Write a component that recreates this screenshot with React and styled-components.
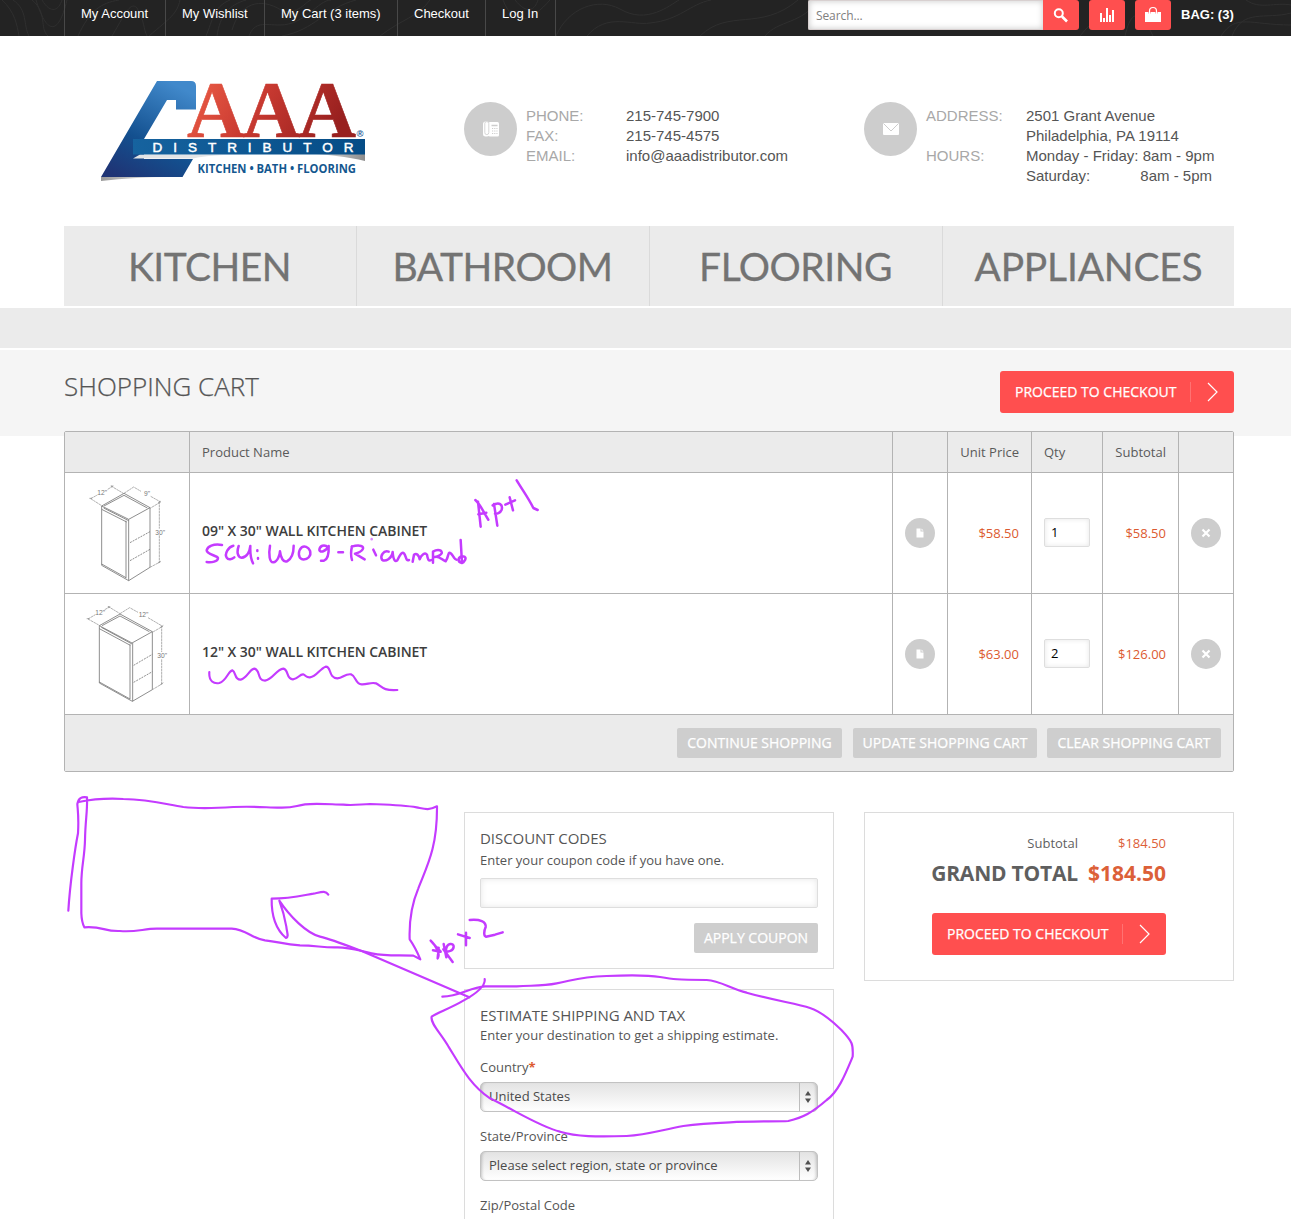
import React from "react";
import styled, { createGlobalStyle, css } from "styled-components";

const sans = '"Open Sans", "Noto Sans", sans-serif';
const arial = '"Liberation Sans", Arial, sans-serif';
const red = "#ff4f4f";
const line = "#b3b3b3";
const ink = "#c43bff";

const GlobalStyle = createGlobalStyle`
  * { box-sizing: border-box; }
  html, body { margin: 0; padding: 0; }
  body { background: #fff; font: 13px/20px ${sans}; color: #555; }
  button, input { font: inherit; margin: 0; }
`;

const Page = styled.div`
  position: relative;
  width: 1291px;
  height: 1219px;
  overflow: hidden;
  background: #fff;
`;
const Inner = styled.div`
  width: 1170px;
  margin-left: 64px;
`;

/* top bar */
const TopBar = styled.div`
  position: relative;
  height: 36px;
  background: #232323;
`;
const Contours = styled.svg`
  position: absolute;
  inset: 0;
  display: block;
`;
const TopInner = styled(Inner)`
  position: relative;
  display: flex;
  justify-content: space-between;
`;
const TopLinks = styled.nav`
  display: flex;
  height: 36px;
  border-right: 1px solid #484848;
`;
const TopLink = styled.a`
  width: ${(p) => p.$w}px;
  border-left: 1px solid #484848;
  padding: 4px 0 0 16px;
  font: 13px/20px ${arial};
  color: #fff;
  white-space: nowrap;
`;
const TopTools = styled.div`
  display: flex;
  width: 426px;
`;
const Search = styled.input`
  width: 235px;
  height: 30px;
  padding: 0 7px 0;
  border: 1px solid #d8d0d0;
  border-right: 0;
  border-radius: 2px 0 0 2px;
  background: #fff;
  box-shadow: inset 0 0 6px rgba(0, 0, 0, 0.22);
  font: 12px/20px ${sans};
  letter-spacing: -0.1px;
  &::placeholder { color: #808080; opacity: 1; }
`;
const ToolButton = styled.button`
  display: flex;
  align-items: center;
  justify-content: center;
  width: 36px;
  height: 30px;
  padding: 0;
  border: 0;
  margin-right: 10px;
  border-radius: ${(p) => (p.$attached ? "0 3px 3px 0" : "3px")};
  background: ${red};
`;
const Bag = styled.span`
  padding-top: 5px;
  font: bold 13px/20px ${arial};
  color: #fff;
  white-space: nowrap;
`;

/* header */
const Header = styled(Inner)`
  display: grid;
  grid-template-columns: 400px 400px 370px;
  height: 190px;
`;
const LogoBox = styled.div`
  padding: 39px 0 0 31px;
`;
const LogoSvg = styled.svg`
  display: block;
  overflow: visible;
`;
const Contact = styled.div`
  display: grid;
  grid-template-columns: 62px 100px 1fr;
  padding-top: 66px;
  font: 15px/20px ${arial};
`;
const Round = styled.span`
  display: flex;
  align-items: center;
  justify-content: center;
  width: ${(p) => p.$w}px;
  height: ${(p) => p.$h}px;
  border-radius: 50%;
  background: #cdcdcd;
`;
const Lines = styled.div`
  padding-top: 4px;
  white-space: pre;
  color: ${(p) => (p.$label ? "#a8a8a8" : "#555")};
`;
const Spread = styled.div`
  display: flex;
  justify-content: space-between;
  width: 186px;
`;

/* category nav */
const CategoryNav = styled(Inner)`
  display: grid;
  grid-template-columns: 293px 293px 293px 291px;
  height: 80px;
  background: #ebebeb;
`;
const Category = styled.a`
  display: flex;
  justify-content: center;
  height: 80px;
  padding-right: ${(p) => (p.$last ? 0 : 1)}px;
  border-right: ${(p) => (p.$last ? "0" : "1px solid #dadada")};
  font: 39px/80px Lato, sans-serif;
  letter-spacing: ${(p) => (p.$last ? "-0.2px" : "-0.5px")};
  color: #737373;
  -webkit-text-stroke: 0.3px #737373;
`;
const Strip = styled.div`
  height: 40px;
  margin: 2px 0;
  background: #ebebeb;
`;
const TitleBand = styled.div`
  height: 86px;
  background: #f5f5f5;
`;
const TitleRow = styled(Inner)`
  display: flex;
  justify-content: space-between;
  padding-top: 21px;
`;
const Title = styled.h1`
  margin: -1px 0 0;
  font: 300 26px/32px ${sans};
  color: #555;
  -webkit-text-stroke: 0.25px #555;
`;
const CheckoutButton = styled.button`
  display: flex;
  align-items: center;
  width: 234px;
  height: 42px;
  padding: 0 15px;
  border: 0;
  border-radius: 3px;
  background: ${red};
  color: #fff;
  font: 14px/20px ${sans};
  -webkit-text-stroke: 0.25px #fff;
  white-space: nowrap;
`;
const CheckoutArrow = styled.svg`
  margin-left: auto;
  flex: none;
`;

/* cart table */
const Cart = styled(Inner)`
  position: relative;
  margin-top: -5px;
  border: 1px solid ${line};
  border-radius: 2px;
  background: #fff;
`;
const gridCols = css`
  display: grid;
  grid-template-columns: 124px 703px 55px 84px 71px 76px 55px;
`;
const HeadRow = styled.div`
  ${gridCols}
  height: 40px;
  background: #ebebeb;
`;
const Row = styled.div`
  ${gridCols}
  height: 121px;
  border-top: 1px solid ${line};
`;
const Cell = styled.div`
  display: flex;
  align-items: center;
  justify-content: ${(p) => (p.$right ? "flex-end" : "flex-start")};
  padding: 0 12px;
  border-left: 1px solid ${line};
  white-space: nowrap;
  color: ${(p) => (p.$price ? "#dc5a30" : "#5a5a5a")};
  &:first-child { border-left: 0; padding: 0; }
`;
const ProductName = styled.h2`
  margin: 0 0 5px;
  font: 600 14px/20px ${sans};
  letter-spacing: -0.04px;
  color: #3d3d3d;
`;
const Qty = styled.input`
  width: 46px;
  height: 29px;
  margin-bottom: 1px;
  padding: 0 6px 1px;
  border: 1px solid #dedede;
  border-radius: 2px;
  box-shadow: inset 0 0 5px rgba(0, 0, 0, 0.1);
  color: #000;
`;
const FootRow = styled.div`
  display: flex;
  justify-content: flex-end;
  gap: 10px;
  height: 57px;
  padding: 13px 12px 0 0;
  border-top: 1px solid ${line};
  background: #ebebeb;
`;
const GreyButton = styled.button`
  width: ${(p) => p.$w}px;
  height: 30px;
  padding: 0;
  border: 0;
  border-radius: 2px;
  margin-right: ${(p) => p.$mr || 0}px;
  background: #cecece;
  color: #fff;
  font: 14px/20px ${sans};
  -webkit-text-stroke: 0.25px #fff;
  white-space: nowrap;
`;

/* lower panels */
const Panels = styled(Inner)`
  display: grid;
  grid-template-columns: 370px 370px;
  column-gap: 30px;
  align-items: start;
  padding: 40px 0 0 400px;
`;
const Stack = styled.div`
  display: flex;
  flex-direction: column;
  gap: 20px;
`;
const Panel = styled.section`
  width: 370px;
  height: ${(p) => p.$h}px;
  padding: 15px;
  border: 1px solid #dcdcdc;
`;
const PanelTitle = styled.h3`
  margin: 0;
  font: 15px/20px ${sans};
  height: ${(p) => p.$h}px;
  letter-spacing: -0.05px;
  color: #555;
`;
const Note = styled.p`
  margin: 0;
  line-height: 20px;
  white-space: nowrap;
`;
const Coupon = styled.input`
  display: block;
  width: 338px;
  height: 30px;
  margin: 8px 0 15px;
  border: 1px solid #dedede;
  border-radius: 2px;
  box-shadow: inset 0 0 6px rgba(0, 0, 0, 0.1);
`;
const RightAlign = styled.div`
  display: flex;
  justify-content: flex-end;
`;
const Label = styled.label`
  display: block;
  padding-top: ${(p) => p.$pt}px;
  height: ${(p) => p.$pt + 25}px;
  line-height: 20px;
`;
const Required = styled.b`
  color: #dc5a30;
`;
const SelectBox = styled.div`
  display: flex;
  align-items: center;
  width: 338px;
  height: 30px;
  padding-left: 8px;
  border: 1px solid #c2c2c2;
  border-radius: 5px;
  background: linear-gradient(#e3e3e3, #fff);
  box-shadow: inset 3px 0 3px -2px rgba(0, 0, 0, 0.2), inset -3px 0 3px -2px rgba(0, 0, 0, 0.2);
  color: #4a4a4a;
`;
const SelectValue = styled.span`
  flex: 1;
  padding-bottom: 2px;
`;
const SelectArrows = styled.svg`
  width: 18px;
  height: 28px;
  border-left: 1px solid #bdbdbd;
`;
const Totals = styled.dl`
  display: grid;
  grid-template-columns: 198px 88px;
  justify-items: end;
  margin: 0;
  padding-top: 5px;
  width: 286px;
`;
const Term = styled.dt`
  font: ${(p) => (p.$grand ? "700 21px/34px" : "13px/20px")} ${sans};
  letter-spacing: ${(p) => (p.$grand ? "-0.2px" : "0")};
  height: ${(p) => (p.$grand ? 37 : 20)}px;
  padding-top: ${(p) => (p.$grand ? 3 : 0)}px;
  color: #5f5f5f;
  white-space: nowrap;
`;
const Amount = styled(Term).attrs({ as: "dd" })`
  margin: 0;
  letter-spacing: 0;
  color: #dc6038;
`;
const TotalAction = styled.div`
  padding: 23px 0 0 52px;
`;
const Ink = styled.svg`
  position: absolute;
  inset: 0;
  pointer-events: none;
`;

function Logo() {
  return (
    <LogoSvg width="275" height="110" viewBox="95 75 275 110">
      <defs>
        <linearGradient id="blue" x1="0.7" y1="0" x2="0.2" y2="1">
          <stop offset="0" stopColor="#4189cb" />
          <stop offset="0.6" stopColor="#13508f" />
          <stop offset="1" stopColor="#1f3475" />
        </linearGradient>
        <linearGradient id="red" x1="0" x2="1" y1="0" y2="0.3">
          <stop offset="0" stopColor="#f2634a" />
          <stop offset="0.5" stopColor="#c93a31" />
          <stop offset="1" stopColor="#98201f" />
        </linearGradient>
        <linearGradient id="banner" x1="0" x2="1">
          <stop offset="0" stopColor="#16639f" />
          <stop offset="1" stopColor="#054c86" />
        </linearGradient>
        <linearGradient id="shade" x1="0" x2="1">
          <stop offset="0" stopColor="#fff" />
          <stop offset="1" stopColor="#8c8c8c" />
        </linearGradient>
        <linearGradient id="shadeLeft" x1="0" x2="1">
          <stop offset="0" stopColor="#999" />
          <stop offset="1" stopColor="#fff" />
        </linearGradient>
      </defs>
      <path d="M101 177h74q-40 0-74 4z" fill="url(#shadeLeft)" />
      <path d="M300 153h65v8q-25-6-65-8z" fill="url(#shade)" />
      <path d="M157 81H191q5 0 5 5V109.500H176V100H167L144 139V159H193L182.500 177H101z" fill="url(#blue)" />
      <path d="M133 158.500 140 154.500H250q-40 0-57 4z" fill="#e2e4e6" />
      <text x="187" y="137" fontFamily="Liberation Serif, serif" fontWeight="bold" fontSize="80" textLength="169" lengthAdjust="spacing" fill="url(#red)" stroke="url(#red)" strokeWidth="0.600">AAA</text>
      <path d="M133 139H365V154.500H133z" fill="url(#banner)" />
      <text x="152.500" y="151.500" fontFamily="Liberation Sans, sans-serif" fontSize="13.500" textLength="201" lengthAdjust="spacing" fill="#fff" stroke="#fff" strokeWidth="0.500">DISTRIBUTOR</text>
      <text x="356.500" y="136.500" fontFamily="Liberation Sans, sans-serif" fontWeight="bold" fontSize="9.500" fill="#1a5a97">®</text>
      <text x="197.500" y="172.500" fontFamily="Open Sans, sans-serif" fontWeight="bold" fontSize="12.500" textLength="158.500" lengthAdjust="spacingAndGlyphs" fill="#14578f">KITCHEN • BATH • FLOORING</text>
    </LogoSvg>
  );
}

function Checkout() {
  return (
    <CheckoutButton>
      PROCEED TO CHECKOUT
      <CheckoutArrow width="30" height="22">
        <path d="M1.500 1v20" stroke="#ff7272" />
        <path d="M19 2 28 11 19 20" fill="none" stroke="#fff" strokeWidth="1.200" />
      </CheckoutArrow>
    </CheckoutButton>
  );
}

function NoteIcon() {
  return (
    <Round $w={30} $h={30}>
      <svg width="8" height="10" viewBox="0 0 8 10">
        <path d="M.5.5H4.500V3.500H7.500V9.500H.5z" fill="#fff" />
        <path d="M5.500.5 7.500 2.500H5.500z" fill="#fff" />
      </svg>
    </Round>
  );
}

function RemoveIcon() {
  return (
    <Round $w={30} $h={30}>
      <svg width="10" height="10" viewBox="0 0 10 10">
        <path d="M1.500 1.500 8.500 8.500M8.500 1.500 1.500 8.500" stroke="#fff" strokeWidth="2.200" />
      </svg>
    </Round>
  );
}

const NarrowCabinet = () => (
  <svg width="124" height="120" viewBox="15 129 372 360" fill="none" stroke="#777" strokeWidth="2.500">
    <path d="M125 228 192 190 270 233 206 268zM125 228V406L206 452 270 412V233M206 268V452M198 272V445M125 238 200 276M131 234 206 272M132 228 192 196 262 234M125 402 198 443" />
    <path d="M210 338 270 305M210 392 270 358" strokeDasharray="6 3" />
    <path d="M92 206 112 195M143 178 160 168M92 206 125 227M153 168 190 190M192 190 221 171 243 184M272 199 302 216 270 235M298 214V296M298 316V398M270 412 302 395M88 205h9M152 168h8M294 219l9-6M294 399l9-6" stroke="#888" strokeWidth="2" strokeDasharray="8 1.500" />
    <g fill="#777" stroke="none" fontFamily="Liberation Sans, sans-serif" fontSize="20">
      <text x="112" y="194">12"</text>
      <text x="252" y="198">9"</text>
      <text x="286" y="314">30"</text>
    </g>
  </svg>
);

const WideCabinet = () => (
  <svg width="124" height="120" viewBox="15 12 372 360" fill="none" stroke="#777" strokeWidth="2.500">
    <path d="M118 107 180 72 277 125 216 159zM118 107V279L217 334 277 299V125M218 159V334M210 163V328M118 116 211 166M124 112 216 162M126 107 180 78 268 125M118 276 210 327" />
    <path d="M221 226 277 193M221 277 277 245" strokeDasharray="6 3" />
    <path d="M84 87 106 74M134 59 151 50M84 87 118 106M144 49 180 71M180 71 209 53 234 67M264 83 308 109 277 127M305 107V186M305 208V282M277 299 309 280M80 86h9M143 51h9M301 112l9-6M301 284l9-6" stroke="#888" strokeWidth="2" strokeDasharray="8 1.500" />
    <g fill="#777" stroke="none" fontFamily="Liberation Sans, sans-serif" fontSize="20">
      <text x="106" y="75">12"</text>
      <text x="236" y="80">12"</text>
      <text x="292" y="204">30"</text>
    </g>
  </svg>
);

const items = [
  { name: '09" X 30" WALL KITCHEN CABINET', price: "$58.50", qty: 1, total: "$58.50", Drawing: NarrowCabinet },
  { name: '12" X 30" WALL KITCHEN CABINET', price: "$63.00", qty: 2, total: "$126.00", Drawing: WideCabinet },
];

const topLinks = [
  ["My Account", 101],
  ["My Wishlist", 99],
  ["My Cart (3 items)", 133],
  ["Checkout", 88],
  ["Log In", 70],
];

function Select({ value }) {
  return (
    <SelectBox>
      <SelectValue>{value}</SelectValue>
      <SelectArrows viewBox="0 0 17 28">
        <path d="M5 12.500 8 8l3 4.500zM5 15.500 8 20l3-4.500z" fill="#505050" />
      </SelectArrows>
    </SelectBox>
  );
}

function Annotations() {
  return (
    <Ink width="1291" height="1219" fill="none" stroke={ink} strokeLinecap="round" strokeLinejoin="round">
      <g transform="translate(60 430) scale(.33333)" strokeWidth="7.500">
        <path d="M486 345C460 340 442 350 440 361C440 374 472 376 474 384C474 395 455 398 440 396" />
        <path d="M520 347C505 350 493 372 500 383C505 391 516 388 523 382" />
        <path d="M536 348C530 365 532 382 545 383C560 382 569 366 571 348C570 368 572 385 579 400M592 361v2M594 384v2" />
        <path d="M630 347C625 375 629 398 640 397C653 396 660 372 660 364C662 383 670 398 681 394C695 386 701 365 701 347" />
        <path d="M725 352C714 362 713 383 727 388C743 390 755 378 750 362C745 350 733 347 725 352" />
        <path d="M805 352C792 341 779 348 778 360C780 369 798 365 806 348C807 370 803 388 792 392L783 392M835 367 849 367" />
        <path d="M876 349C872 365 873 380 876 390M875 350C900 343 914 349 908 358C902 367 889 370 885 371L914 388M940 359 948 376" />
        <path d="M935 327v1" strokeOpacity="0.6" />
        <path d="M986 365C970 360 960 378 966 389C976 397 996 385 998 366C1000 390 1005 397 1012 391C1018 378 1025 364 1032 370C1039 378 1037 394 1047 390" />
        <path d="M1058 395 1062 374C1070 368 1077 376 1079 388C1084 374 1095 366 1101 374C1103 388 1106 395 1114 390" />
        <path d="M1119 398V365C1134 356 1148 361 1145 370C1140 378 1128 380 1124 381C1138 377 1145 390 1157 394C1165 383 1164 369 1168 368C1178 368 1180 389 1190 389" />
        <path d="M1202 330 1206 399C1190 395 1195 381 1206 379C1219 380 1220 386 1210 397" />
        <path d="M1262 290 1254 215M1246 210C1263 225 1273 252 1285 269M1255 253 1279 248M1302 222 1312 287M1298 226C1318 214 1329 224 1325 239C1321 249 1310 252 1305 251M1336 224 1365 211M1349 202 1359 241M1370 151C1390 184 1407 207 1420 234L1433 240" />
      </g>
      <g transform="translate(60 590) scale(.33333)" strokeWidth="6.500">
        <path d="M448 246C446 275 462 282 478 279C500 272 504 244 517 241C529 246 522 270 542 269C562 264 567 239 583 236C602 239 590 271 615 272C638 269 648 239 670 236C687 239 678 269 699 268C714 267 718 253 729 253C739 257 738 263 750 262C770 260 779 236 797 230C815 229 804 263 832 265C850 263 854 251 873 253C890 260 885 282 905 283C922 284 932 276 948 280C965 289 968 303 1012 300" />
      </g>
      <g transform="translate(50 780) scale(.33333)" strokeWidth="6.500">
        <path d="M55 392C60 310 76 200 84 160C87 110 83 90 82 72C85 55 95 49 111 52C113 90 106 120 105 180C104 230 94 260 94 310V400Q95 427 103 442C160 438 160 455 210 453C260 457 280 446 320 446H545C590 449 605 475 645 481C690 486 700 493 750 496C800 497 820 503 860 502C900 501 930 513 965 520C1010 529 1040 525 1090 527L1111 538Q1096 502 1079 478C1077 420 1086 370 1105 325C1130 260 1162 205 1161 79C1135 92 1125 87 1100 82C1060 75 1010 74 960 72C930 73 910 77 880 74C840 73 800 69 765 73C735 77 735 84 690 83C650 83 620 78 550 81C490 85 450 87 400 81C340 71 300 59 220 57Q150 53 86 66" />
        <path d="M835 344C827 331 815 336 790 341C760 346 720 356 665 356C664 410 680 450 708 474C718 471 710 455 709 440Q702 400 688 362C720 410 770 460 810 470C850 480 900 500 935 513L1258 652" />
        <path strokeWidth="7.500" d="M1142 482C1160 500 1170 520 1163 535L1166 503M1149 511 1172 515L1158 500M1181 492 1189 532M1180 508 1208 546M1188 510C1190 486 1212 489 1211 500C1210 513 1197 515 1191 514M1224 463 1259 474M1248 458 1248 496M1259 420C1290 417 1309 425 1307 441C1301 454 1301 469 1308 470L1335 464 1358 457" />
      </g>
      <g transform="translate(420 960) scale(.33333)" strokeWidth="6.500">
        <path d="M67 110C120 108 150 82 195 79H290C350 76 370 78 410 70C470 58 480 51 560 48C630 45 690 46 720 51C760 58 770 59 860 60C900 62 930 85 980 98C1060 121 1130 131 1170 144C1200 154 1240 186 1265 211C1298 246 1300 253 1298 290C1275 345 1255 395 1220 420C1175 459 1150 472 1105 483C1070 485 1000 483 930 487C860 490 840 491 790 498C720 511 680 525 620 528C530 531 470 530 420 515C360 500 290 454 210 415C150 375 120 315 85 259C62 219 30 190 35 170C50 158 90 146 130 122C170 100 197 76 194 57" />
      </g>
    </Ink>
  );
}

export default function App() {
  return (
    <Page>
      <GlobalStyle />
      <TopBar>
        <Contours width="1291" height="36" fill="none" stroke="#2f2f2f">
          <path d="M2 0C15 12 17 25 19 36M13 0C28 10 23 25 29 36M32 0C48 13 39 28 48 36M42 0C51 15 59 10 62 0M36 0C46 33 58 38 67 0M78 36C90 10 101 3 119 0M112 36C123 18 130 0 137 8C145 22 143 28 147 36M149 36C170 18 177 14 180 0M206 36C213 20 213 7 230 0M217 36C220 15 229 5 246 0M232 30C240 3 260-3 281 10C298 16 306 1 311 0M249 36C255 21 264 25 280 25C305 25 318 0 331 0M282 36C315 30 325 8 356 0M380 36C402 19 418 17 430 0M515 0C527 15 535 10 538 0M503 0C515 30 532 20 550 0" />
          <path d="M556 36C568 8 598-3 620 9C647 25 670 5 679 0M587 36C607 12 632 26 650 23C680 20 690 4 711 0M700 36C729 8 760 32 798 0M765 36C778 20 803 24 818 0M1080 36C1092 21 1103 13 1118 7M1125 36C1130 15 1136 9 1147 24L1153 36M1221 36C1236 13 1250 25 1291 25M1232 36C1243 8 1265 20 1291 13M1246 0C1260 10 1275 2 1291 5" />
        </Contours>
        <TopInner>
          <TopLinks>
            {topLinks.map(([text, w]) => (
              <TopLink key={text} $w={w}>{text}</TopLink>
            ))}
          </TopLinks>
          <TopTools>
            <Search placeholder="Search..." />
            <ToolButton $attached>
              <svg width="16" height="16" viewBox="0 0 16 16" fill="none" stroke="#fff">
                <circle cx="5.800" cy="6.300" r="4" strokeWidth="2" />
                <path d="M9 9.500 14 14.500" strokeWidth="2.600" />
              </svg>
            </ToolButton>
            <ToolButton>
              <svg width="15" height="15" fill="#fff">
                <path d="M0 5h2v9H0zM3 10h2v4H3zM6 0h2v14H6zM9 7h2v7H9zM12 2h2v12h-2z" />
              </svg>
            </ToolButton>
            <ToolButton>
              <svg width="18" height="18" viewBox="0 0 18 18">
                <path d="M5.500 8V5Q5.500 1.500 9 1.500T12.500 5V8" fill="none" stroke="#fff" strokeWidth="1.200" />
                <path d="M1 6H4.500V7.500H6.500V6H11.500V7.500H13.500V6H17V16H1z" fill="#fff" />
              </svg>
            </ToolButton>
            <Bag>BAG: (3)</Bag>
          </TopTools>
        </TopInner>
      </TopBar>

      <Header>
        <LogoBox><Logo /></LogoBox>
        <Contact>
          <Round $w={53} $h={54}>
            <svg width="16" height="16" viewBox="0 0 16 16">
              <rect x="5.500" y="1" width="10.500" height="14.500" rx="1.500" fill="#fff" />
              <rect x="0" y="0.600" width="6.500" height="14.900" rx="2.500" fill="#fff" />
              <rect x="1.800" y="0.600" width="4" height="13" rx="2" fill="#fff" stroke="#cdcdcd" strokeWidth="0.800" />
              <path d="M8.500 4.500h6" stroke="#cdcdcd" strokeWidth="1.500" />
              <path d="M9 7.500h5.500M9 10h5.500M9 12.500h5.500" stroke="#cdcdcd" strokeDasharray="1.200 1" />
            </svg>
          </Round>
          <Lines $label>{"PHONE:\nFAX:\nEMAIL:"}</Lines>
          <Lines>{"215-745-7900\n215-745-4575\ninfo@aaadistributor.com"}</Lines>
        </Contact>
        <Contact>
          <Round $w={53} $h={54}>
            <svg width="16" height="12" viewBox="0 0 16 12">
              <rect width="16" height="12" rx="1" fill="#fff" />
              <path d="M.5 0.500 8 8 15.500.5" fill="none" stroke="#cdcdcd" />
            </svg>
          </Round>
          <Lines $label>{"ADDRESS:\n\nHOURS:"}</Lines>
          <Lines>
            {"2501 Grant Avenue\nPhiladelphia, PA 19114\nMonday - Friday: 8am - 9pm"}
            <Spread><span>Saturday:</span><span>8am - 5pm</span></Spread>
          </Lines>
        </Contact>
      </Header>

      <CategoryNav>
        <Category>KITCHEN</Category>
        <Category>BATHROOM</Category>
        <Category>FLOORING</Category>
        <Category $last>APPLIANCES</Category>
      </CategoryNav>
      <Strip />

      <TitleBand>
        <TitleRow>
          <Title>SHOPPING CART</Title>
          <Checkout />
        </TitleRow>
      </TitleBand>

      <Cart>
        <HeadRow>
          <Cell />
          <Cell>Product Name</Cell>
          <Cell />
          <Cell $right>Unit Price</Cell>
          <Cell>Qty</Cell>
          <Cell $right>Subtotal</Cell>
          <Cell />
        </HeadRow>
        {items.map(({ name, price, qty, total, Drawing }) => (
          <Row key={name}>
            <Cell><Drawing /></Cell>
            <Cell><ProductName>{name}</ProductName></Cell>
            <Cell><NoteIcon /></Cell>
            <Cell $right $price>{price}</Cell>
            <Cell><Qty defaultValue={qty} /></Cell>
            <Cell $right $price>{total}</Cell>
            <Cell><RemoveIcon /></Cell>
          </Row>
        ))}
        <FootRow>
          <GreyButton $w={165} $mr={1}>CONTINUE SHOPPING</GreyButton>
          <GreyButton $w={184}>UPDATE SHOPPING CART</GreyButton>
          <GreyButton $w={174}>CLEAR SHOPPING CART</GreyButton>
        </FootRow>
      </Cart>

      <Panels>
        <Stack>
          <Panel $h={157}>
            <PanelTitle $h={22}>DISCOUNT CODES</PanelTitle>
            <Note>Enter your coupon code if you have one.</Note>
            <Coupon />
            <RightAlign><GreyButton $w={124}>APPLY COUPON</GreyButton></RightAlign>
          </Panel>
          <Panel $h={320}>
            <PanelTitle $h={20}>ESTIMATE SHIPPING AND TAX</PanelTitle>
            <Note>Enter your destination to get a shipping estimate.</Note>
            <Label $pt={12}>Country<Required>*</Required></Label>
            <Select value="United States" />
            <Label $pt={14}>State/Province</Label>
            <Select value="Please select region, state or province" />
            <Label $pt={14}>Zip/Postal Code</Label>
          </Panel>
        </Stack>
        <Panel $h={169}>
          <Totals>
            <Term>Subtotal</Term>
            <Amount>$184.50</Amount>
            <Term $grand>GRAND TOTAL</Term>
            <Amount $grand>$184.50</Amount>
          </Totals>
          <TotalAction><Checkout /></TotalAction>
        </Panel>
      </Panels>
      <Annotations />
    </Page>
  );
}
